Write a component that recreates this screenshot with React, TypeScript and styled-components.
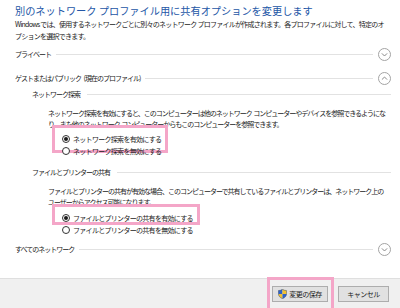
import React from "react";
import styled, { createGlobalStyle, css } from "styled-components";

const GlobalStyle = createGlobalStyle`
    html, body {
        margin: 0;
        padding: 0;
        background: #fff;
    }
    body {
        font-family: "Noto Sans CJK JP", sans-serif;
        color: #1a1a1a;
    }
`;

const Page = styled.div`
    width: 400px;
    height: 308px;
    display: flex;
    flex-direction: column;
    overflow: hidden;
`;

const Content = styled.div`
    flex: 1;
    padding: 3px 9px 0 15px;
`;

const Title = styled.h1`
    margin: 0;
    font-size: 10.2px;
    line-height: 16px;
    font-weight: 400;
    color: #2356a6;
    white-space: nowrap;
`;

const Description = styled.p`
    margin: 0;
    font-size: 7px;
    line-height: 11.5px;
    letter-spacing: -0.75px;
    white-space: nowrap;
`;

const Section = styled.section<{ $top: number; $bottom: number }>`
    margin-top: ${p => p.$top}px;
    padding-bottom: ${p => p.$bottom}px;
`;

const SectionHeader = styled.div`
    display: flex;
    align-items: center;
    height: 16px;
    gap: 5px;
    font-size: 7px;
    letter-spacing: -1px;
    word-spacing: 2px;
    color: #222;
    white-space: pre;
`;

const Rule = styled.div`
    flex: 1;
    height: 1px;
    background: #e2e2e2;
`;

const SubHeader = styled.div<{ $top: number }>`
    display: flex;
    align-items: center;
    height: 12px;
    gap: 7px;
    margin: ${p => p.$top}px 0 0 17px;
    font-size: 7px;
    letter-spacing: -1px;
    color: #222;
    white-space: nowrap;
`;

const Paragraph = styled.p`
    margin: 8px 0 0 33px;
    font-size: 7px;
    line-height: 11px;
    letter-spacing: -1px;
    word-spacing: 1px;
    white-space: nowrap;
`;

const RadioGroup = styled.div<{ $top: number }>`
    margin: ${p => p.$top}px 0 0 47px;
    display: flex;
    flex-direction: column;
`;

const RadioRow = styled.label<{ $highlight?: boolean; $boxBottom?: number }>`
    position: relative;
    display: flex;
    width: fit-content;
    align-items: center;
    height: 12px;
    gap: 3px;
    font-size: 7px;
    letter-spacing: -0.7px;
    white-space: nowrap;
    ${p => p.$highlight && css`
        &::after {
            content: "";
            position: absolute;
            top: -8px;
            bottom: ${p.$boxBottom ?? -4}px;
            left: -10px;
            right: -7px;
            border: 3px solid #f4a6c8;
            pointer-events: none;
        }
    `}
`;

const RadioDot = styled.span<{ $checked?: boolean }>`
    width: 8px;
    height: 8px;
    box-sizing: border-box;
    border-radius: 50%;
    border: 1px solid #333;
    background: #fff;
    display: flex;
    align-items: center;
    justify-content: center;
    &::before {
        content: "";
        width: 4px;
        height: 4px;
        border-radius: 50%;
        background: ${p => (p.$checked ? "#1a1a1a" : "transparent")};
    }
`;

const Footer = styled.div`
    height: 30px;
    box-sizing: border-box;
    border-top: 1px solid #dfdfdf;
    background: #f0f0f0;
    display: flex;
    justify-content: flex-end;
    align-items: center;
    gap: 10px;
    padding-right: 11px;
`;

const Button = styled.button<{ $width: number; $highlight?: boolean }>`
    position: relative;
    width: ${p => p.$width}px;
    height: 16px;
    box-sizing: border-box;
    border: 1px solid #adadad;
    background: #e1e1e1;
    font-family: inherit;
    font-size: 7px;
    letter-spacing: -0.5px;
    color: #1a1a1a;
    padding: 0;
    display: flex;
    align-items: center;
    justify-content: center;
    gap: 2px;
    ${p => p.$highlight && css`
        &::after {
            content: "";
            position: absolute;
            top: -10px;
            bottom: -14px;
            left: -6px;
            right: -7px;
            border: 3px solid #f4a6c8;
            pointer-events: none;
        }
    `}
`;

const Chevron: React.FC<{ up?: boolean }> = ({ up }) => (
    <svg width="13" height="13" viewBox="0 0 13 13">
        <circle cx="6.5" cy="6.5" r="6" fill="none" stroke="#a3a3a3" strokeWidth="1" />
        <path
            d={up ? "M3.9 7.6 L6.5 5 L9.1 7.6" : "M3.9 5.4 L6.5 8 L9.1 5.4"}
            fill="none"
            stroke="#8a8a8a"
            strokeWidth="1"
        />
    </svg>
);

const shieldPath = "M4.5 0.3 C3.2 1.2 1.8 1.6 0.4 1.6 L0.4 4.6 C0.4 7.2 2.2 8.8 4.5 9.7 C6.8 8.8 8.6 7.2 8.6 4.6 L8.6 1.6 C7.2 1.6 5.8 1.2 4.5 0.3 Z";

const Shield: React.FC = () => (
    <svg width="9" height="10" viewBox="0 0 9 10">
        <defs>
            <clipPath id="shield">
                <path d={shieldPath} />
            </clipPath>
        </defs>
        <g clipPath="url(#shield)">
            <rect x="0" y="0" width="4.5" height="5" fill="#2f63c8" />
            <rect x="4.5" y="0" width="4.5" height="5" fill="#f2c230" />
            <rect x="0" y="5" width="4.5" height="5" fill="#f2c230" />
            <rect x="4.5" y="5" width="4.5" height="5" fill="#2f63c8" />
        </g>
        <path d={shieldPath} fill="none" stroke="#3a4a6a" strokeWidth="0.5" />
    </svg>
);

const App: React.FC = () => (
    <Page>
        <GlobalStyle />
        <Content>
            <Title>別のネットワーク プロファイル用に共有オプションを変更します</Title>
            <Description>
                Windows では、使用するネットワークごとに別々のネットワーク プロファイルが作成されます。各プロファイルに対して、特定のオ<br />
                プションを選択できます。
            </Description>

            <Section $top={4} $bottom={8}>
                <SectionHeader>プライベート<Rule /><Chevron /></SectionHeader>
            </Section>

            <Section $top={0} $bottom={5}>
                <SectionHeader>ゲストまたはパブリック (現在のプロファイル)<Rule /><Chevron up /></SectionHeader>

                <SubHeader $top={2}>ネットワーク探索<Rule /></SubHeader>
                <Paragraph>
                    ネットワーク探索を有効にすると、このコンピューターは他のネットワーク コンピューターやデバイスを参照できるようにな<br />
                    り、また他のネットワーク コンピューターからもこのコンピューターを参照できます。
                </Paragraph>
                <RadioGroup $top={3}>
                    <RadioRow $highlight $boxBottom={-8}><RadioDot $checked />ネットワーク探索を有効にする</RadioRow>
                    <RadioRow><RadioDot />ネットワーク探索を無効にする</RadioRow>
                </RadioGroup>

                <SubHeader $top={9}>ファイルとプリンターの共有<Rule /></SubHeader>
                <Paragraph>
                    ファイルとプリンターの共有が有効な場合、このコンピューターで共有しているファイルとプリンターは、ネットワーク上の<br />
                    ユーザーからアクセス可能になります。
                </Paragraph>
                <RadioGroup $top={4}>
                    <RadioRow $highlight $boxBottom={-1}><RadioDot $checked />ファイルとプリンターの共有を有効にする</RadioRow>
                    <RadioRow><RadioDot />ファイルとプリンターの共有を無効にする</RadioRow>
                </RadioGroup>
            </Section>

            <Section $top={0} $bottom={0}>
                <SectionHeader>すべてのネットワーク<Rule /><Chevron /></SectionHeader>
            </Section>
        </Content>
        <Footer>
            <Button $width={56} $highlight><Shield />変更の保存</Button>
            <Button $width={51}>キャンセル</Button>
        </Footer>
    </Page>
);

export default App;
